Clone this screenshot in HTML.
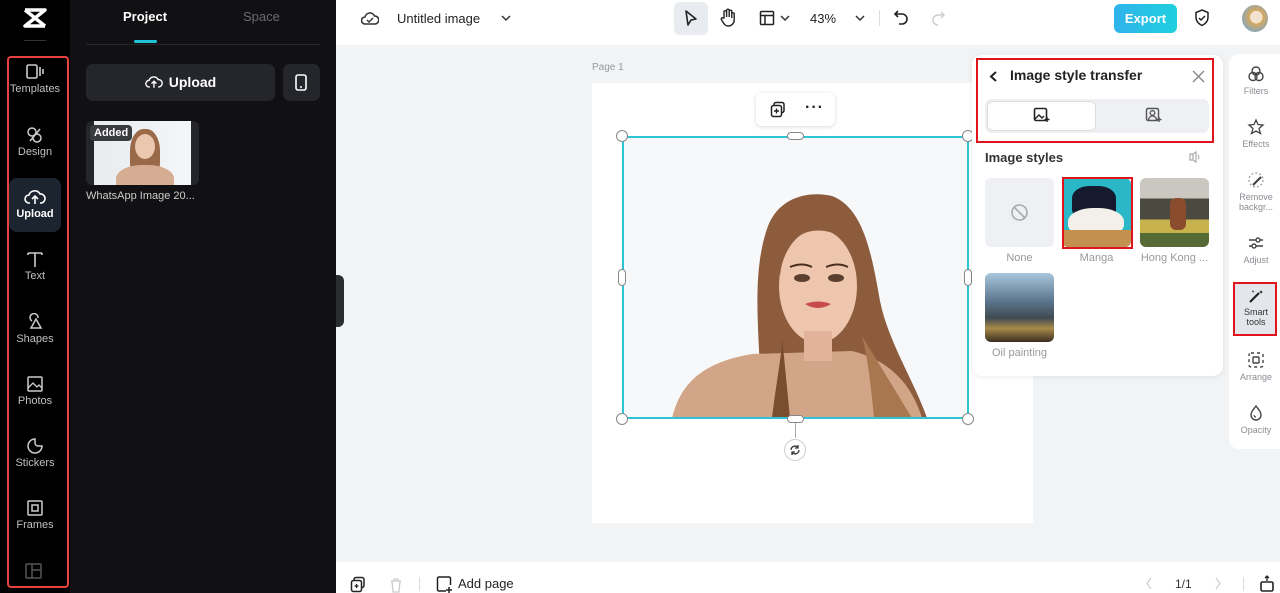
<!DOCTYPE html>
<html><head><meta charset="utf-8"><style>
*{margin:0;padding:0;box-sizing:border-box}
body{width:1280px;height:593px;overflow:hidden;position:relative;font-family:"Liberation Sans",sans-serif;background:#f1f3f5}
.a{position:absolute}
.rail{left:0;top:0;width:70px;height:593px;background:#000}
.panel{left:70px;top:0;width:266px;height:593px;background:#111114}
.ri{position:absolute;left:8px;width:54px;text-align:center;color:#bfc0c4;font-size:11px}
.ri svg{display:block;margin:0 auto 2px}
.top{left:336px;top:0;width:944px;height:45px;background:#fff}
.bot{left:336px;top:562px;width:944px;height:31px;background:#fff}
.rr{position:absolute;left:0;width:50px;text-align:center;color:#8a8d93;font-size:9px;line-height:10px}
.rr svg{display:block;margin:0 auto 3px}
</style></head><body>
<div class="a rail"></div>
<div class="a panel"></div>
<svg class="a" style="left:22px;top:7px" width="26" height="22" viewBox="0 0 26 22"><path d="M3 3h20l-20 16h20M3 3l20 16" stroke="#fff" stroke-width="3.5" fill="none" stroke-linejoin="round"/></svg>
<div class="a" style="left:24px;top:40px;width:22px;height:1px;background:#333"></div>
<div class="a" style="left:7px;top:56px;width:62px;height:532px;border:2px solid #e8423f;border-radius:4px"></div>
<div class="a" style="left:9px;top:178px;width:52px;height:54px;background:#1c2430;border-radius:8px"></div>
<div class="ri" style="top:63px"><svg width="20" height="18" viewBox="0 0 20 18"><rect x="2" y="2" width="10" height="13" rx="1.5" stroke="#ccc" stroke-width="1.6" fill="none"/><path d="M15 4v9M18 6v5" stroke="#ccc" stroke-width="1.6"/></svg>Templates</div>
<div class="ri" style="top:126px"><svg width="20" height="18" viewBox="0 0 20 18"><circle cx="7" cy="6" r="4" stroke="#ccc" stroke-width="1.5" fill="none"/><circle cx="12" cy="12" r="4" stroke="#ccc" stroke-width="1.5" fill="none"/><path d="M5 15l10-12" stroke="#ccc" stroke-width="1.5"/></svg>Design</div>
<div class="ri" style="top:188px;color:#fff;font-weight:bold"><svg width="22" height="18" viewBox="0 0 22 18"><path d="M6 15H5a4 4 0 010-8 6 6 0 0111-1 4.5 4.5 0 011 9h-1M11 16V9M8 11l3-3 3 3" stroke="#fff" stroke-width="1.6" fill="none"/></svg>Upload</div>
<div class="ri" style="top:250px"><svg width="20" height="18" viewBox="0 0 20 18"><path d="M3 3h14M10 3v14M3 3v2M17 3v2" stroke="#ccc" stroke-width="1.6" fill="none"/></svg>Text</div>
<div class="ri" style="top:313px"><svg width="20" height="18" viewBox="0 0 20 18"><path d="M7 8a4 4 0 116-3M11 6l5 9H6z" stroke="#ccc" stroke-width="1.5" fill="none"/></svg>Shapes</div>
<div class="ri" style="top:375px"><svg width="20" height="18" viewBox="0 0 20 18"><rect x="3" y="2" width="14" height="14" rx="1" stroke="#ccc" stroke-width="1.5" fill="none"/><path d="M3 13l5-5 4 4 2-2 3 3" stroke="#ccc" stroke-width="1.3" fill="none"/></svg>Photos</div>
<div class="ri" style="top:437px"><svg width="20" height="18" viewBox="0 0 20 18"><path d="M10 2a7 7 0 107 7h-4a3 3 0 01-3-3z" stroke="#ccc" stroke-width="1.5" fill="none"/></svg>Stickers</div>
<div class="ri" style="top:499px"><svg width="20" height="18" viewBox="0 0 20 18"><rect x="3" y="2" width="14" height="14" rx="1" stroke="#ccc" stroke-width="1.5" fill="none"/><rect x="7" y="6" width="6" height="6" stroke="#ccc" stroke-width="1.5" fill="none"/></svg>Frames</div>
<svg class="a" style="left:25px;top:563px" width="18" height="16"><rect x="1" y="1" width="15" height="14" rx="1" stroke="#555" stroke-width="1.5" fill="none"/><path d="M7 1v14M7 7h9" stroke="#555" stroke-width="1.5"/></svg>
<div class="a" style="left:123px;top:9px;color:#fff;font-weight:bold;font-size:13px">Project</div>
<div class="a" style="left:243px;top:9px;color:#6a6b70;font-size:13px">Space</div>
<div class="a" style="left:86px;top:44px;width:234px;height:1px;background:#26272b"></div>
<div class="a" style="left:134px;top:40px;width:23px;height:3px;background:#1fc4d6;border-radius:2px"></div>
<div class="a" style="left:86px;top:64px;width:189px;height:37px;background:#25262b;border-radius:7px;color:#fff;font-weight:bold;font-size:14px;line-height:37px;text-align:center"><svg style="vertical-align:-3px;margin-right:6px" width="18" height="16" viewBox="0 0 22 18"><path d="M6 15H5a4 4 0 010-8 6 6 0 0111-1 4.5 4.5 0 011 9h-1M11 16V9M8 11l3-3 3 3" stroke="#fff" stroke-width="1.7" fill="none"/></svg>Upload</div>
<div class="a" style="left:283px;top:64px;width:37px;height:37px;background:#25262b;border-radius:7px"><svg style="margin:10px 12px" width="12" height="17"><rect x="1" y="1" width="10" height="15" rx="2" stroke="#fff" stroke-width="1.6" fill="none"/><path d="M5 13h2" stroke="#fff" stroke-width="1.5"/></svg></div>
<div class="a" style="left:86px;top:121px;width:113px;height:64px;background:#25262b;border-radius:6px"></div>
<div class="a" style="left:94px;top:121px;width:97px;height:64px;background:linear-gradient(90deg,#e8ecef,#f4f6f7);overflow:hidden">
<div class="a" style="left:36px;top:8px;width:30px;height:48px;border-radius:45% 45% 30% 30%;background:#9a6a48"></div>
<div class="a" style="left:41px;top:13px;width:20px;height:25px;border-radius:50%;background:#ecc7b0"></div>
<div class="a" style="left:22px;top:44px;width:58px;height:30px;border-radius:45% 45% 0 0;background:#d6ad92"></div>
</div>
<div class="a" style="left:90px;top:125px;background:#3a3b3f;color:#fff;font-size:11px;font-weight:bold;padding:2px 4px;border-radius:4px">Added</div>
<div class="a" style="left:86px;top:190px;color:#ccc;font-size:11px">WhatsApp Image 20...</div>
<div class="a" style="left:336px;top:275px;width:8px;height:52px;background:#2b2c30;border-radius:0 6px 6px 0"></div>
<div class="a top"></div>
<svg class="a" style="left:361px;top:10px" width="18" height="17" viewBox="0 0 18 17"><path d="M5 14H4a3.5 3.5 0 010-7 5 5 0 019.5-1 4 4 0 01.5 8h-1z" stroke="#333" stroke-width="1.6" fill="none"/><path d="M6 10l2 2 4-4" stroke="#333" stroke-width="1.4" fill="none"/></svg>
<div class="a" style="left:397px;top:11px;font-size:13px;color:#222">Untitled image</div>
<svg class="a" style="left:501px;top:14px" width="10" height="8"><path d="M1 2l4 4 4-4" stroke="#333" stroke-width="1.5" fill="none"/></svg>
<div class="a" style="left:674px;top:2px;width:34px;height:33px;background:#e8ebef;border-radius:6px"></div>
<svg class="a" style="left:684px;top:9px" width="14" height="18"><path d="M2 2l10 8-5 1-3 5z" stroke="#222" stroke-width="1.6" fill="none" stroke-linejoin="round"/></svg>
<svg class="a" style="left:720px;top:8px" width="16" height="19"><path d="M4 10V4a1.3 1.3 0 012.6 0v5V2.5a1.3 1.3 0 012.6 0V9V3.5a1.3 1.3 0 012.6 0V10V6a1.2 1.2 0 012.4 0v6a6 6 0 01-6 6c-3 0-4-2-6-5l-1-2a1.2 1.2 0 012-1z" stroke="#222" stroke-width="1.4" fill="none"/></svg>
<svg class="a" style="left:759px;top:10px" width="16" height="16"><rect x="1.5" y="1.5" width="13" height="13" rx="1" stroke="#222" stroke-width="1.5" fill="none"/><path d="M1.5 5.5h13M6 5.5v9" stroke="#222" stroke-width="1.5"/></svg>
<svg class="a" style="left:780px;top:14px" width="10" height="8"><path d="M1 2l4 4 4-4" stroke="#333" stroke-width="1.5" fill="none"/></svg>
<div class="a" style="left:810px;top:11px;font-size:13px;color:#222">43%</div>
<svg class="a" style="left:855px;top:14px" width="10" height="8"><path d="M1 2l4 4 4-4" stroke="#333" stroke-width="1.5" fill="none"/></svg>
<div class="a" style="left:879px;top:10px;width:1px;height:16px;background:#ddd"></div>
<svg class="a" style="left:893px;top:9px" width="16" height="17"><path d="M5 2L2 5l3 3M2 5h7a5 5 0 010 10H6" stroke="#222" stroke-width="1.6" fill="none"/></svg>
<svg class="a" style="left:931px;top:10px" width="14" height="16"><path d="M10 2l3 3-3 3M13 5H7a5 5 0 000 10" stroke="#ccc" stroke-width="1.4" fill="none"/></svg>
<div class="a" style="left:1114px;top:4px;width:63px;height:29px;background:linear-gradient(90deg,#2fb2ea,#1fd0df);border-radius:6px;color:#fff;font-weight:bold;font-size:13px;line-height:29px;text-align:center">Export</div>
<svg class="a" style="left:1194px;top:9px" width="16" height="18"><path d="M8 1l6 2.5v5c0 4-3 6.5-6 8-3-1.5-6-4-6-8v-5z" stroke="#222" stroke-width="1.5" fill="none"/><path d="M5 9l2 2 4-4" stroke="#222" stroke-width="1.5" fill="none"/></svg>
<div class="a" style="left:1242px;top:5px;width:26px;height:27px;border-radius:50%;background:radial-gradient(circle at 55% 45%,#f2e2d0 0 30%,#d9a85a 31%,#7aa7c9 80%)"></div>
<div class="a" style="left:592px;top:62px;font-size:10px;color:#999">Page 1</div>
<div class="a" style="left:592px;top:83px;width:441px;height:440px;background:#fff"></div>
<div class="a" style="left:756px;top:93px;width:79px;height:33px;background:#fff;border-radius:6px;box-shadow:0 1px 4px rgba(0,0,0,.15)"></div>
<svg class="a" style="left:770px;top:101px" width="16" height="17"><rect x="4" y="1.5" width="10" height="10" rx="2" stroke="#222" stroke-width="1.5" fill="none"/><rect x="1.5" y="4.5" width="10" height="11" rx="2" stroke="#222" stroke-width="1.5" fill="#fff"/><path d="M6.5 7.5v5M4 10h5" stroke="#222" stroke-width="1.4"/></svg>
<div class="a" style="left:805px;top:99px;font-size:16px;font-weight:bold;color:#222;letter-spacing:1px">···</div>
<svg class="a" style="left:622px;top:136px" width="346" height="282" viewBox="0 0 346 282">
<rect width="346" height="282" fill="#f6f8f9"/>
<path d="M140 282 C138 200 128 140 146 90 C158 60 188 55 210 60 C242 72 250 120 258 165 C266 205 292 245 305 282Z" fill="#8d5c3d"/>
<path d="M50 282 C60 240 90 225 130 218 L230 215 C270 225 290 250 300 282Z" fill="#d2a588"/>
<path d="M150 282 C155 240 160 220 160 200 L168 282Z" fill="#7a4c30"/>
<path d="M252 282 C248 240 245 220 240 200 L290 282Z" fill="#a9774f"/>
<ellipse cx="196" cy="150" rx="39" ry="57" fill="#edc6ad"/>
<rect x="182" y="195" width="28" height="30" fill="#e2b398"/>
<path d="M158 140 C163 90 200 82 238 112 C226 92 190 68 158 100Z" fill="#8d5c3d"/>
<ellipse cx="180" cy="142" rx="8" ry="4" fill="#5a3f30"/><ellipse cx="214" cy="142" rx="8" ry="4" fill="#5a3f30"/>
<path d="M168 131q12-5 22 0M204 131q12-5 22 0" stroke="#4a2f20" stroke-width="2" fill="none"/>
<path d="M183 168q13 -5 26 0q-13 8 -26 0z" fill="#c94a4a"/>
</svg>
<div class="a" style="left:622px;top:136px;width:347px;height:283px;border:2px solid #2ec4d6"></div>
<div class="a" style="left:616px;top:130px;width:12px;height:12px;border-radius:50%;background:#fff;border:1px solid #888"></div>
<div class="a" style="left:962px;top:130px;width:12px;height:12px;border-radius:50%;background:#fff;border:1px solid #888"></div>
<div class="a" style="left:616px;top:413px;width:12px;height:12px;border-radius:50%;background:#fff;border:1px solid #888"></div>
<div class="a" style="left:962px;top:413px;width:12px;height:12px;border-radius:50%;background:#fff;border:1px solid #888"></div>
<div class="a" style="left:787px;top:132px;width:17px;height:8px;border-radius:4px;background:#fff;border:1px solid #888"></div>
<div class="a" style="left:787px;top:415px;width:17px;height:8px;border-radius:4px;background:#fff;border:1px solid #888"></div>
<div class="a" style="left:618px;top:269px;width:8px;height:17px;border-radius:4px;background:#fff;border:1px solid #888"></div>
<div class="a" style="left:964px;top:269px;width:8px;height:17px;border-radius:4px;background:#fff;border:1px solid #888"></div>
<div class="a" style="left:795px;top:423px;width:1px;height:15px;background:#aaa"></div>
<div class="a" style="left:784px;top:439px;width:22px;height:22px;border-radius:50%;background:#fff;border:1px solid #ccc"></div>
<svg class="a" style="left:789px;top:444px" width="12" height="12"><path d="M2 6a4 4 0 017-2.5M10 6a4 4 0 01-7 2.5M9 1v3H6M3 11V8h3" stroke="#333" stroke-width="1.3" fill="none"/></svg>
<div class="a" style="left:972px;top:55px;width:251px;height:321px;background:#fff;border-radius:10px;box-shadow:0 1px 6px rgba(0,0,0,.08)"></div>
<svg class="a" style="left:988px;top:70px" width="10" height="13"><path d="M8 2L3 6.5 8 11" stroke="#222" stroke-width="2" fill="none"/></svg>
<div class="a" style="left:1010px;top:67px;font-size:14px;font-weight:bold;color:#222">Image style transfer</div>
<svg class="a" style="left:1192px;top:70px" width="13" height="13"><path d="M1 1l11 11M12 1L1 12" stroke="#888" stroke-width="1.4"/></svg>
<div class="a" style="left:985px;top:99px;width:224px;height:34px;background:#eef0f3;border-radius:7px"></div>
<div class="a" style="left:987px;top:101px;width:109px;height:30px;background:#fff;border-radius:6px;border:1px solid #ddd"></div>
<svg class="a" style="left:1033px;top:107px" width="17" height="16"><rect x="1.5" y="1.5" width="12" height="12" rx="1.5" stroke="#222" stroke-width="1.6" fill="none"/><path d="M2 12l4-4 3 3 2-2" stroke="#222" stroke-width="1.4" fill="none"/><path d="M14 10v5M11.5 12.5h5" stroke="#222" stroke-width="1.4"/></svg>
<svg class="a" style="left:1145px;top:107px" width="17" height="16"><rect x="1.5" y="1.5" width="12" height="12" rx="1.5" stroke="#555" stroke-width="1.4" fill="none"/><circle cx="7.5" cy="6" r="2.3" stroke="#555" stroke-width="1.3" fill="none"/><path d="M3.5 13a4 4 0 018 0" stroke="#555" stroke-width="1.3" fill="none"/><path d="M14 10v5M11.5 12.5h5" stroke="#555" stroke-width="1.4"/></svg>
<div class="a" style="left:976px;top:58px;width:238px;height:85px;border:2px solid #e0141c"></div>
<div class="a" style="left:985px;top:150px;font-size:13px;font-weight:bold;color:#333">Image styles</div>
<svg class="a" style="left:1188px;top:151px" width="14" height="12"><path d="M2 3h3v6H2zM5 3l3-2v10L5 9" stroke="#aaa" stroke-width="1.2" fill="none"/><path d="M10 4a3 3 0 010 4" stroke="#aaa" stroke-width="1.2" fill="none"/></svg>
<div class="a" style="left:985px;top:178px;width:69px;height:69px;background:#eef0f3;border-radius:6px"></div>
<svg class="a" style="left:1010px;top:203px" width="19" height="19"><circle cx="9.5" cy="9.5" r="7.5" stroke="#aaa" stroke-width="1.6" fill="none"/><path d="M4.5 4.5l10 10" stroke="#aaa" stroke-width="1.6"/></svg>
<div class="a" style="left:1062px;top:178px;width:69px;height:69px;border-radius:6px;overflow:hidden;background:#2bb8c6">
<div class="a" style="left:10px;top:8px;width:44px;height:30px;border-radius:40% 40% 20% 20%;background:#151a2e"></div>
<div class="a" style="left:6px;top:30px;width:56px;height:30px;border-radius:45%;background:#f3efe9"></div>
<div class="a" style="left:0;top:52px;width:69px;height:17px;background:#c49050"></div>
</div>
<div class="a" style="left:1062px;top:177px;width:71px;height:72px;border:2px solid #e0141c"></div>
<div class="a" style="left:1140px;top:178px;width:69px;height:69px;border-radius:6px;overflow:hidden;background:linear-gradient(180deg,#c9c7bf 0 30%,#4b4a40 30% 60%,#c8b24c 60% 80%,#566a36 80%)">
<div class="a" style="left:30px;top:20px;width:16px;height:32px;background:#8a4c2c;border-radius:6px"></div></div>
<div class="a" style="left:985px;top:252px;width:69px;text-align:center;font-size:11px;color:#999">None</div>
<div class="a" style="left:1062px;top:252px;width:69px;text-align:center;font-size:11px;color:#999">Manga</div>
<div class="a" style="left:1137px;top:252px;width:75px;text-align:center;font-size:11px;color:#999;white-space:nowrap">Hong Kong ...</div>
<div class="a" style="left:985px;top:273px;width:69px;height:69px;border-radius:6px;background:linear-gradient(180deg,#a8c6dc 0%,#5d7790 40%,#3f4a52 65%,#a88a4a 80%,#3b2e22 100%)"></div>
<div class="a" style="left:985px;top:347px;width:69px;text-align:center;font-size:11px;color:#999">Oil painting</div>
<div class="a" style="left:1229px;top:54px;width:51px;height:395px;background:#fff;border-radius:10px 0 0 10px"></div>
<div class="a" style="left:1233px;top:282px;width:44px;height:54px;background:#e3e6ea;border:2px solid #e0141c"></div>
<div class="rr" style="left:1231px;top:65px"><svg width="18" height="18"><circle cx="9" cy="6" r="4" stroke="#444" stroke-width="1.4" fill="none"/><circle cx="6" cy="11.5" r="4" stroke="#444" stroke-width="1.4" fill="none"/><circle cx="12" cy="11.5" r="4" stroke="#444" stroke-width="1.4" fill="none"/></svg>Filters</div>
<div class="rr" style="left:1231px;top:118px"><svg width="18" height="18"><path d="M9 2l2 4.5 5 .5-4 3.5 1.5 5L9 13l-4.5 2.5 1.5-5-4-3.5 5-.5z" stroke="#444" stroke-width="1.3" fill="none"/></svg>Effects</div>
<div class="rr" style="left:1231px;top:171px"><svg width="18" height="18"><circle cx="9" cy="9" r="7" stroke="#999" stroke-width="1.2" stroke-dasharray="2 2" fill="none"/><path d="M6 14l8-8" stroke="#444" stroke-width="2.2"/></svg>Remove<br>backgr...</div>
<div class="rr" style="left:1231px;top:234px"><svg width="18" height="18"><path d="M2 6h14M2 12h14" stroke="#444" stroke-width="1.4"/><circle cx="11" cy="6" r="2" fill="#fff" stroke="#444" stroke-width="1.4"/><circle cx="7" cy="12" r="2" fill="#fff" stroke="#444" stroke-width="1.4"/></svg>Adjust</div>
<div class="rr" style="left:1231px;top:288px;color:#333"><svg width="18" height="16"><path d="M3 14L12 5" stroke="#222" stroke-width="2.2"/><path d="M14 2l.6 1.4L16 4l-1.4.6L14 6l-.6-1.4L12 4l1.4-.6zM6 2l.4 1 1 .4-1 .4L6 5l-.4-1.2-1-.4 1-.4z" fill="#222"/></svg>Smart<br>tools</div>
<div class="rr" style="left:1231px;top:351px"><svg width="18" height="18"><rect x="2" y="2" width="14" height="14" rx="2" stroke="#444" stroke-width="1.4" stroke-dasharray="3 3" fill="none"/><rect x="6" y="6" width="6" height="6" rx="1" stroke="#444" stroke-width="1.4" fill="none"/></svg>Arrange</div>
<div class="rr" style="left:1231px;top:404px"><svg width="18" height="18"><path d="M9 2c3 4 5 6 5 9a5 5 0 01-10 0c0-3 2-5 5-9z" stroke="#444" stroke-width="1.4" fill="none"/><path d="M7 11a2 2 0 002 2" stroke="#444" stroke-width="1.2" fill="none"/></svg>Opacity</div>
<div class="a bot"></div>
<svg class="a" style="left:350px;top:576px" width="16" height="17"><rect x="4" y="1.5" width="10" height="10" rx="2" stroke="#222" stroke-width="1.5" fill="none"/><rect x="1.5" y="4.5" width="10" height="11" rx="2" stroke="#222" stroke-width="1.5" fill="#fff"/><path d="M6.5 8v4M4.5 10h4" stroke="#222" stroke-width="1.3"/></svg>
<svg class="a" style="left:389px;top:577px" width="14" height="16"><path d="M2 4h10M5 4V2h4v2M3 4l1 11h6l1-11" stroke="#ccc" stroke-width="1.3" fill="none"/></svg>
<div class="a" style="left:419px;top:577px;width:1px;height:14px;background:#ddd"></div>
<svg class="a" style="left:436px;top:576px" width="17" height="17"><path d="M10 15H3a1.5 1.5 0 01-1.5-1.5v-11A1.5 1.5 0 013 1h10a1.5 1.5 0 011.5 1.5V9" stroke="#222" stroke-width="1.5" fill="none"/><path d="M13 11v6M10 14h6" stroke="#222" stroke-width="1.5"/></svg>
<div class="a" style="left:458px;top:576px;font-size:13px;color:#222">Add page</div>
<svg class="a" style="left:1145px;top:577px" width="8" height="13"><path d="M6 1L2 6.5 6 12" stroke="#ccc" stroke-width="1.2" fill="none"/></svg>
<div class="a" style="left:1175px;top:577px;font-size:12px;color:#333">1/1</div>
<svg class="a" style="left:1214px;top:577px" width="8" height="13"><path d="M2 1l4 5.5L2 12" stroke="#ccc" stroke-width="1.2" fill="none"/></svg>
<div class="a" style="left:1243px;top:577px;width:1px;height:14px;background:#ddd"></div>
<svg class="a" style="left:1259px;top:574px" width="16" height="19"><path d="M6 4l2-2 2 2M8 2v5" stroke="#222" stroke-width="1.3" fill="none"/><rect x="2" y="8" width="12" height="9" rx="1.5" stroke="#222" stroke-width="1.6" fill="none"/></svg>
</body></html>
